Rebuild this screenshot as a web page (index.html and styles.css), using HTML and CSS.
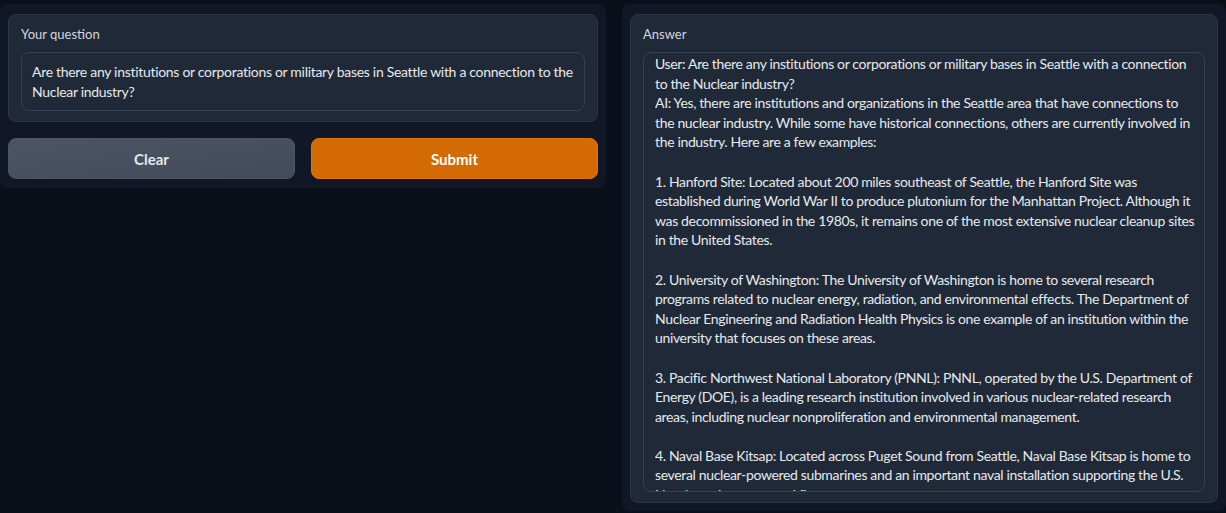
FILE: index.html
```html
<!DOCTYPE html>
<html lang="en">
<head>
<meta charset="utf-8">
<title>Question and Answer</title>
<link rel="stylesheet" href="styles.css">
</head>
<body>
<div class="app">
  <div class="col panel left">
    <div class="block">
      <span class="label">Your question</span>
      <div class="input question">Are there any institutions or corporations or military bases in Seattle with a connection to the Nuclear industry?</div>
    </div>
    <div class="btn-row">
      <button class="btn secondary">Clear</button>
      <button class="btn primary">Submit</button>
    </div>
  </div>
  <div class="col panel right">
    <div class="block answer">
      <span class="label">Answer</span>
      <div class="input output"><div class="scroll">User: Are there any institutions or corporations or military bases in Seattle with a connection
to the Nuclear industry?
AI: Yes, there are institutions and organizations in the Seattle area that have connections to
the nuclear industry. While some have historical connections, others are currently involved in
the industry. Here are a few examples:

1. Hanford Site: Located about 200 miles southeast of Seattle, the Hanford Site was
established during World War II to produce plutonium for the Manhattan Project. Although it
was decommissioned in the 1980s, it remains one of the most extensive nuclear cleanup sites
in the United States.

2. University of Washington: The University of Washington is home to several research
programs related to nuclear energy, radiation, and environmental effects. The Department of
Nuclear Engineering and Radiation Health Physics is one example of an institution within the
university that focuses on these areas.

3. Pacific Northwest National Laboratory (PNNL): PNNL, operated by the U.S. Department of
Energy (DOE), is a leading research institution involved in various nuclear-related research
areas, including nuclear nonproliferation and environmental management.

4. Naval Base Kitsap: Located across Puget Sound from Seattle, Naval Base Kitsap is home to
several nuclear-powered submarines and an important naval installation supporting the U.S.
Navy's nuclear-powered fleet.</div></div>
    </div>
  </div>
</div>
</body>
</html>
```

FILE: styles.css
```css
* { box-sizing: border-box; }

html, body {
  margin: 0;
  height: 100%;
  overflow: hidden;
}

body {
  background: #0b0f19;
  color: #e5e7eb;
  font-family: Lato, "Noto Sans", sans-serif;
  font-size: 14px;
}

.app {
  display: flex;
  align-items: flex-start;
  gap: 16px;
  padding-top: 4px;
}

.panel {
  background: #111726;
  border-radius: 8px;
  padding: 10px 8px 9px;
}

.left {
  width: 606px;
  flex: none;
}

.right {
  flex: 1;
  height: 507px;
  padding-bottom: 8px;
}

.block {
  background: #1f2937;
  border: 1px solid #2c3544;
  border-radius: 8px;
  padding: 10px 12px 10px;
  display: flex;
  flex-direction: column;
  gap: 9px;
}

.answer {
  height: 100%;
}

.label {
  display: block;
  font-size: 13px;
  line-height: 18px;
  color: #d4d7dc;
}

.input {
  background: #1f2937;
  border: 1px solid #364152;
  border-radius: 8px;
  font-size: 14px;
  letter-spacing: -0.3px;
  line-height: 19.6px;
  color: #e7e9ed;
}

.question {
  padding: 9px 10px 9px;
  white-space: pre-wrap;
}

.output {
  flex: 1;
  overflow: hidden;
  padding: 1px 8px 0 11px;
  letter-spacing: -0.35px;
}

.scroll {
  white-space: pre;
}

.btn-row {
  display: flex;
  gap: 16px;
  margin-top: 16px;
}

.btn {
  flex: 1;
  height: 41px;
  border-radius: 8px;
  font-family: Lato, "Noto Sans", sans-serif;
  font-size: 15px;
  font-weight: 700;
  cursor: pointer;
}

.secondary {
  background: linear-gradient(to bottom right, #4b5563, #414b59);
  border: 1px solid #4b5563;
  color: #e5e7eb;
}

.primary {
  background: #d46a02;
  border: 1px solid #dd7410;
  color: #ffffff;
}
```
